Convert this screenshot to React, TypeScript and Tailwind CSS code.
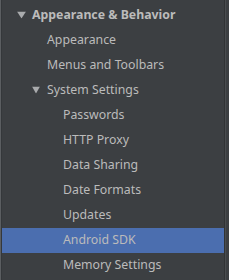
import React from 'react';

interface TreeRow {
  label: string;
  level: number;
  expanded?: boolean;
  bold?: boolean;
  selected?: boolean;
}

const rows: TreeRow[] = [
  { label: 'Appearance & Behavior', level: 0, expanded: true, bold: true },
  { label: 'Appearance', level: 1 },
  { label: 'Menus and Toolbars', level: 1 },
  { label: 'System Settings', level: 1, expanded: true },
  { label: 'Passwords', level: 2 },
  { label: 'HTTP Proxy', level: 2 },
  { label: 'Data Sharing', level: 2 },
  { label: 'Date Formats', level: 2 },
  { label: 'Updates', level: 2 },
  { label: 'Android SDK', level: 2, selected: true },
  { label: 'Memory Settings', level: 2 },
];

const indent = ['pl-[30px]', 'pl-[45px]', 'pl-[61px]'];

const Arrow = ({ big }: { big?: boolean }) => (
  <svg
    width={big ? 9 : 8}
    height="7"
    viewBox={big ? '0 0 9 7' : '0 0 8 7'}
    className="absolute -left-[15px] top-1/2 -translate-y-1/2"
  >
    <path d={big ? 'M0 0 H9 L4.5 7 Z' : 'M0 0 H8 L4 7 Z'} fill="#a9abad" />
  </svg>
);

export default function App() {
  return (
    <div className="w-[229px] h-[280px] bg-[#3c3f42] flex overflow-hidden font-['Noto_Sans',sans-serif] text-[12.3px] text-[#bbbbbb]">
      <div className="w-px bg-[#5b5e61]" />
      <div className="w-px bg-[#35383b]" />
      <div className="flex-1 flex flex-col pt-[3px]">
        {rows.map((row) => (
          <div
            key={row.label}
            className={`h-[25px] flex items-center pb-[1px] ${indent[row.level]} ${
              row.selected ? 'bg-[#4b6eaf]' : ''
            }`}
          >
            <span className={`relative leading-none ${row.bold ? 'font-bold' : ''}`}>
              {row.expanded && <Arrow big={row.bold} />}
              {row.label}
            </span>
          </div>
        ))}
      </div>
      <div className="w-px bg-[#313335]" />
      <div className="w-px bg-[#4a4d50]" />
      <div className="w-[3px]" />
    </div>
  );
}
